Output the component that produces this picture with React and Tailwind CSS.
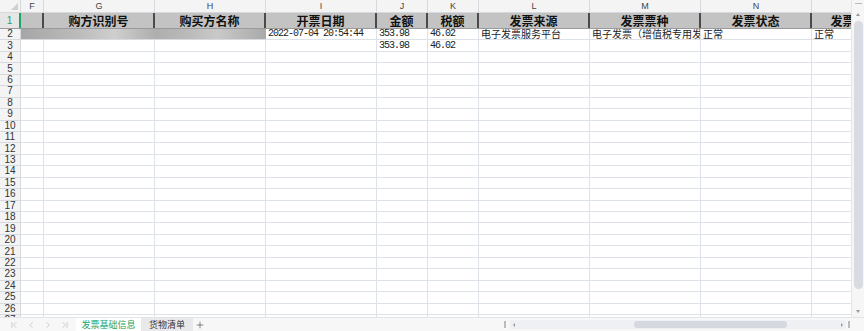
import React from 'react';
import { ChevronFirst, ChevronLeft, ChevronRight, ChevronLast, Plus } from 'lucide-react';

const cols = [
  { key: 'F', w: 'w-[23px]' },
  { key: 'G', w: 'w-[111px]', title: '购方识别号' },
  { key: 'H', w: 'w-[111px]', title: '购买方名称' },
  { key: 'I', w: 'w-[111px]', title: '开票日期' },
  { key: 'J', w: 'w-[51px]', title: '金额' },
  { key: 'K', w: 'w-[51px]', title: '税额' },
  { key: 'L', w: 'w-[111px]', title: '发票来源' },
  { key: 'M', w: 'w-[111px]', title: '发票票种' },
  { key: 'N', w: 'w-[111px]', title: '发票状态' },
  { key: 'O', w: 'w-[111px]', title: '发票风险等级' },
];

const data = {
  2: { I: '2022-07-04 20:54:44', J: '353.98', K: '46.02', L: '电子发票服务平台', M: '电子发票（增值税专用发票）', N: '正常', O: '正常' },
  3: { J: '353.98', K: '46.02' },
};

const mono = new Set(['I', 'J', 'K']);
const rows = Array.from({ length: 26 }, (_, i) => i + 2);

const App = () => {
  return (
    <div className="w-[864px] h-[331px] bg-white flex flex-col overflow-hidden font-['Noto_Sans_CJK_SC',sans-serif]">
      <div className="flex h-[317px]">
        {/* sheet */}
        <div className="flex-1 overflow-hidden flex flex-col">
          {/* column letters */}
          <div className="flex h-[13px] shrink-0 bg-[#f4f4f4] border-b border-[#d6d9de]">
            <div className="w-[21px] shrink-0 relative border-r border-[#d6d9de]">
              <div className="absolute right-[2px] bottom-[2px] w-0 h-0 border-l-[7px] border-l-transparent border-b-[7px] border-b-[#cfcfcf]" />
            </div>
            {cols.map((c) => (
              <div key={c.key} className={`${c.w} shrink-0 border-r border-[#d6d9de] flex items-center justify-center text-[9px] leading-none text-[#444] font-['Liberation_Sans',sans-serif]`}>
                {c.key}
              </div>
            ))}
          </div>

          {/* header row 1 */}
          <div className="flex h-[16px] shrink-0 border-b border-[#9a9a9a]">
            <div className="w-[21px] shrink-0 bg-[#e6e6e6] border-r-2 border-[#21a366] flex items-center justify-center text-[10px] leading-none text-[#21a366] font-['Liberation_Sans',sans-serif]">
              1
            </div>
            {cols.map((c) => (
              <div key={c.key} className={`${c.w} shrink-0 bg-[#c3c3c3] border-r-2 border-[#4a4a4a] flex items-center justify-center text-[12px] leading-[14px] font-bold text-[#111] whitespace-nowrap overflow-hidden`}>
                {c.title}
              </div>
            ))}
          </div>

          {/* data rows */}
          {rows.map((r) => (
            <div key={r} className="flex h-[11.45px] shrink-0">
              <div className="w-[21px] shrink-0 bg-[#f4f4f4] border-r border-b border-[#d6d9de] flex items-center justify-center text-[10px] leading-none text-[#333] font-['Liberation_Sans',sans-serif]">
                {r}
              </div>
              {r === 2 ? (
                <div className="w-[245px] shrink-0 border-b border-[#d6d9de] bg-[linear-gradient(90deg,#a6a6a6,#bdbdbd_25%,#cfcfcf_38%,#aeaeae_55%,#bcbcbc_70%,#c9c9c9_80%,#a9a9a9)]" />
              ) : null}
              {cols
                .filter((c) => !(r === 2 && ['F', 'G', 'H'].includes(c.key)))
                .map((c) => {
                  const v = data[r]?.[c.key];
                  return (
                    <div
                      key={c.key}
                      className={`${c.w} shrink-0 border-r border-b border-[#dde1e8] flex items-center pl-[2px] overflow-hidden whitespace-nowrap text-[#222] leading-[10px] ${
                        mono.has(c.key)
                          ? "font-['Liberation_Mono',monospace] text-[10px] tracking-[-1px]"
                          : 'text-[10px]'
                      }`}
                    >
                      {v}
                    </div>
                  );
                })}
            </div>
          ))}
        </div>

        {/* vertical scrollbar */}
        <div className="w-[13px] shrink-0 bg-[#f6f6f6] border-l border-[#e4e6ea] flex flex-col items-center pt-[3px] pb-[4px]">
          <div className="w-[7px] h-[1px] bg-[#b8b8b8]" />
          <div className="mt-[9px] w-0 h-0 border-l-[2px] border-l-transparent border-r-[2px] border-r-transparent border-b-[3px] border-b-[#9a9a9a]" />
          <div className="mt-[5px] w-[9px] flex-1 rounded-full bg-[#d8dbe1]" />
          <div className="mt-[21px] w-0 h-0 border-l-[2px] border-l-transparent border-r-[2px] border-r-transparent border-t-[3px] border-t-[#9a9a9a]" />
        </div>
      </div>

      {/* sheet tabs bar */}
      <div className="h-[14px] shrink-0 flex items-center bg-[#f7f7f7] border-t border-[#e2e4e8]">
        <div className="flex items-center gap-[7px] pl-[9px] w-[76px] text-[#b3b3b3]">
          <ChevronFirst size={10} strokeWidth={1.5} />
          <ChevronLeft size={10} strokeWidth={1.5} />
          <ChevronRight size={10} strokeWidth={1.5} />
          <ChevronLast size={10} strokeWidth={1.5} />
        </div>
        <div className="w-[65px] h-full bg-white flex items-center justify-center text-[9px] leading-none text-[#21a366]">
          发票基础信息
        </div>
        <div className="w-[52px] h-full bg-[#e9e9eb] flex items-center justify-center text-[9px] leading-none text-[#333]">
          货物清单
        </div>
        <div className="ml-[2px] text-[#444]">
          <Plus size={10} strokeWidth={1.5} />
        </div>
        <div className="flex-1" />
        <div className="w-[2px] h-[7px] bg-[#bbb] mr-[4px]" />
        <div className="w-[336px] h-[9px] bg-[#eef0f4] flex items-center px-[3px]">
          <div className="w-0 h-0 border-t-[2px] border-t-transparent border-b-[2px] border-b-transparent border-r-[2px] border-r-[#999]" />
          <div className="w-[119px]" />
          <div className="w-[153px] h-[7px] rounded-full bg-[#d5d8df]" />
          <div className="flex-1" />
          <div className="w-0 h-0 border-t-[2px] border-t-transparent border-b-[2px] border-b-transparent border-l-[2px] border-l-[#999]" />
        </div>
        <div className="w-[2px] h-[7px] bg-[#bbb] ml-[2px] mr-[14px]" />
      </div>
    </div>
  );
};

export default App;
